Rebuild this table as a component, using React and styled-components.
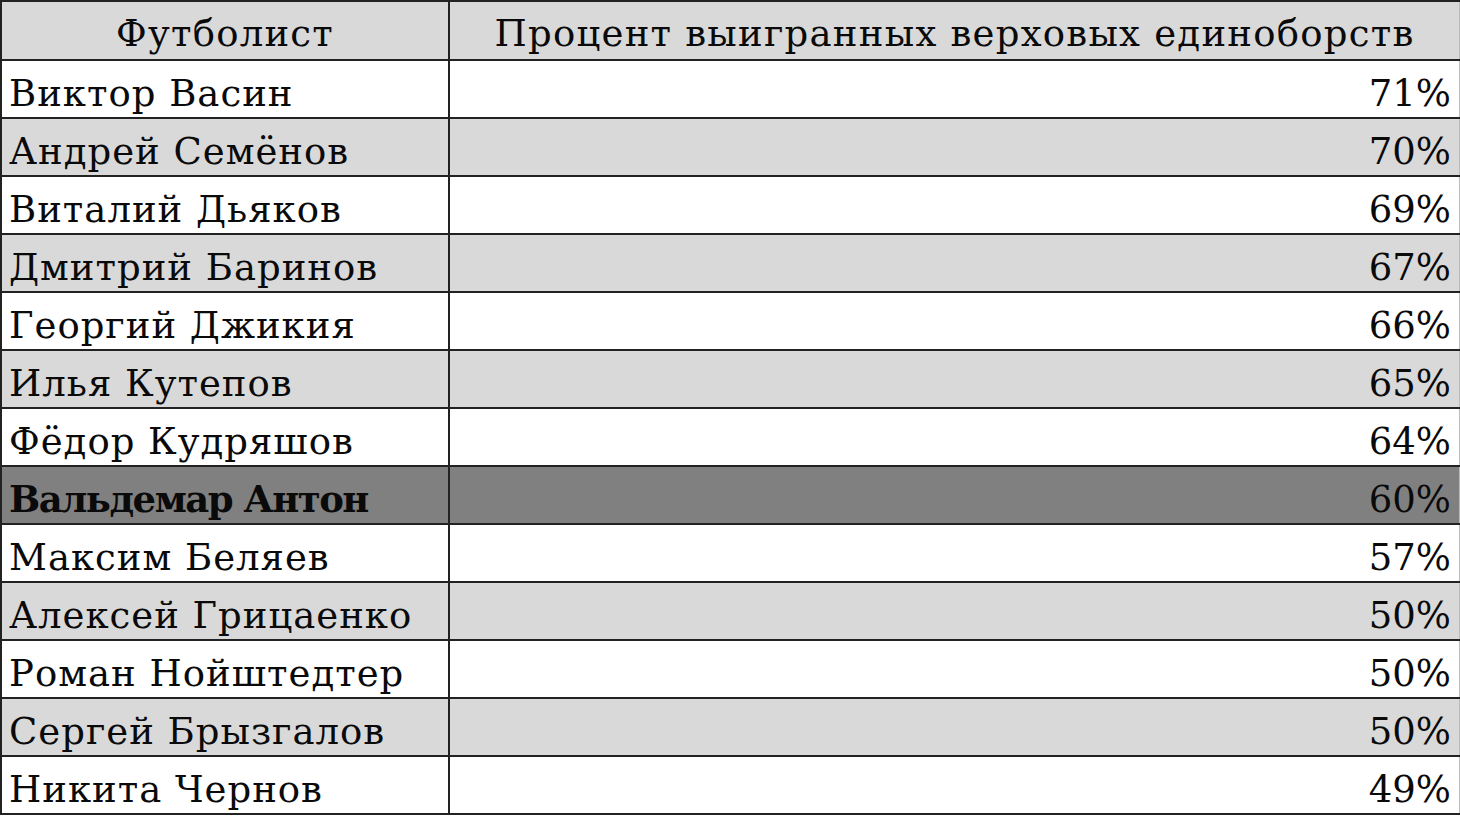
import React from "react";
import styled, { createGlobalStyle } from "styled-components";

const Global = createGlobalStyle`
  html, body { margin: 0; padding: 0; background: #ffffff; }
  body { width: 1460px; height: 816px; overflow: hidden; }
`;

const Table = styled.table`
  border-collapse: collapse;
  table-layout: fixed;
  width: 1460px;
  font-family: "DejaVu Serif", "Liberation Serif", serif;
  color: #0a0a0a;
  border-top: 2px solid #222;
  border-left: 2px solid #222;
`;

const HeadCell = styled.th`
  height: 50px;
  padding: 0 0 7px;
  background: #d9d9d9;
  font-weight: 400;
  font-size: 37px;
  letter-spacing: 1.25px;
  line-height: 1;
  text-align: center;
  vertical-align: bottom;
  border-right: 2px solid #222;
  border-bottom: 2px solid #222;
  &:last-child { border-right: 1px solid #bbb; }
`;

const bgFor = (tone) =>
  tone === "accent" ? "#808080" : tone === "grey" ? "#d9d9d9" : "#ffffff";

const Cell = styled.td`
  height: 51px;
  padding: 0 ${(p) => (p.$num ? "8px" : "0")} 5px ${(p) => (p.$num ? "0" : "7px")};
  background: ${(p) => bgFor(p.$tone)};
  font-size: 37px;
  letter-spacing: ${(p) => (p.$tone === "accent" ? "-1.5px" : "1px")};
  line-height: 1;
  font-weight: ${(p) => (p.$tone === "accent" ? 700 : 400)};
  text-align: ${(p) => (p.$num ? "right" : "left")};
  vertical-align: bottom;
  white-space: nowrap;
  border-right: 2px solid #222;
  border-bottom: 2px solid #222;
  &:last-child { border-right: 1px solid #bbb; }
`;

const Num = styled.span`
  font-weight: 400;
  letter-spacing: 0;
`;

const rows = [
  ["Виктор Васин", "71%"],
  ["Андрей Семёнов", "70%"],
  ["Виталий Дьяков", "69%"],
  ["Дмитрий Баринов", "67%"],
  ["Георгий Джикия", "66%"],
  ["Илья Кутепов", "65%"],
  ["Фёдор Кудряшов", "64%"],
  ["Вальдемар Антон", "60%", true],
  ["Максим Беляев", "57%"],
  ["Алексей Грицаенко", "50%"],
  ["Роман Нойштедтер", "50%"],
  ["Сергей Брызгалов", "50%"],
  ["Никита Чернов", "49%"],
];

export default function App() {
  return (
    <>
      <Global />
      <Table>
        <colgroup>
          <col style={{ width: 448 }} />
          <col />
        </colgroup>
        <thead>
          <tr>
            <HeadCell>Футболист</HeadCell>
            <HeadCell>Процент выигранных верховых единоборств</HeadCell>
          </tr>
        </thead>
        <tbody>
          {rows.map(([name, pct, accent], i) => {
            const tone = accent ? "accent" : i % 2 === 1 ? "grey" : "white";
            return (
              <tr key={name}>
                <Cell $tone={tone}>{name}</Cell>
                <Cell $tone={tone} $num>
                  <Num>{pct}</Num>
                </Cell>
              </tr>
            );
          })}
        </tbody>
      </Table>
    </>
  );
}
